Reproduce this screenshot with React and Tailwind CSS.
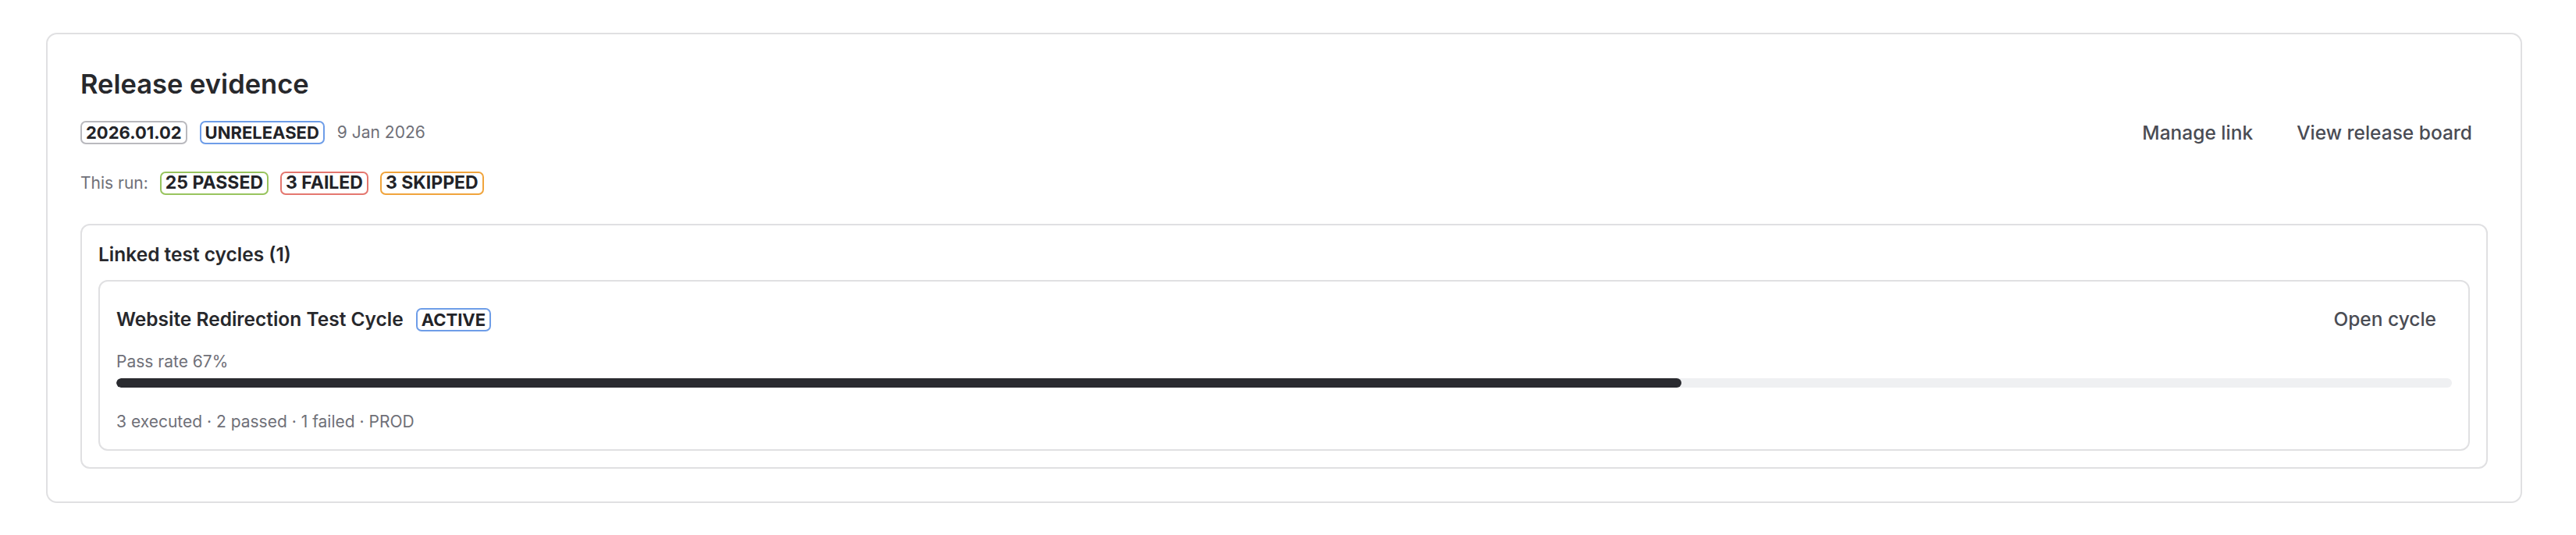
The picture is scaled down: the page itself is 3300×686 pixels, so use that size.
import React from 'react';

// Release evidence panel: version/status header, run totals and linked test cycles

const badgeTones = {
  neutral: 'border-[#b9b9be]',
  info: 'border-[#6e9de8]',
  success: 'border-[#98c45e]',
  danger: 'border-[#e4776f]',
  warning: 'border-[#f0a43c]',
};

const Badge = ({ tone = 'neutral', large = false, children }) => (
  <span
    className={`inline-flex h-[30px] items-center rounded-[7px] border-2 bg-white px-[5px] font-bold leading-none text-[#222328] ${large ? 'text-[23px]' : 'text-[22px]'} ${badgeTones[tone]}`}
  >
    {children}
  </span>
);

const GhostButton = ({ children, className = '' }) => (
  <button
    type="button"
    className={`flex h-[44px] items-center rounded-[8px] px-5 text-[24.5px] font-medium text-[#4a4c54] hover:bg-gray-100 ${className}`}
  >
    {children}
  </button>
);

const cycle = {
  name: 'Website Redirection Test Cycle',
  status: 'ACTIVE',
  passRate: 67,
  executed: 3,
  passed: 2,
  failed: 1,
  env: 'PROD',
};

const CycleCard = ({ item }) => (
  <div className="mt-[17px] rounded-[12px] border-2 border-[#e0e0e2] p-[21px]">
    <div className="flex h-[56px] items-center justify-between">
      <div className="flex items-center gap-4">
        <span className="text-[24.5px] font-semibold text-[#27282c]">{item.name}</span>
        <Badge tone="info">{item.status}</Badge>
      </div>
      <GhostButton>Open cycle</GhostButton>
    </div>
    <p className="mt-[12px] text-[21px] leading-[28px] text-[#6f7078]">Pass rate {item.passRate}%</p>
    <div className="mt-[7px] h-[12px] w-full overflow-hidden rounded-full bg-[#eff0f2]">
      <div className="h-full rounded-full bg-[#2a2b30]" style={{ width: `${item.passRate}%` }} />
    </div>
    <p className="mt-[30px] text-[21px] leading-[28px] text-[#6f7078]">
      {item.executed} executed · {item.passed} passed · {item.failed} failed · {item.env}
    </p>
  </div>
);

export default function App() {
  return (
    <div className="min-h-[686px] bg-white pl-[59px] pr-[69px] pt-[42px] font-[Inter,sans-serif]">
      <section className="rounded-[14px] border-2 border-[#e0e0e2] p-[42px]">
        <h2 className="text-[34.5px] font-semibold leading-[44px] text-[#27282c]">Release evidence</h2>

        <div className="mt-[18px] flex h-[44px] items-center justify-between">
          <div className="flex items-center gap-4">
            <Badge>2026.01.02</Badge>
            <Badge tone="info">UNRELEASED</Badge>
            <span className="text-[21px] text-[#6f7078]">9 Jan 2026</span>
          </div>
          <div className="flex items-center gap-4">
            <GhostButton>Manage link</GhostButton>
            <GhostButton>View release board</GhostButton>
          </div>
        </div>

        <div className="mt-[27px] flex items-center gap-[15px]">
          <span className="text-[21px] text-[#6f7078]">This run:</span>
          <Badge tone="success" large>25 PASSED</Badge>
          <Badge tone="danger" large>3 FAILED</Badge>
          <Badge tone="warning" large>3 SKIPPED</Badge>
        </div>

        <div className="mt-[36px] rounded-[12px] border-2 border-[#e0e0e2] p-[21px]">
          <h3 className="text-[24.5px] font-semibold leading-[32px] text-[#27282c]">Linked test cycles (1)</h3>
          <CycleCard item={cycle} />
        </div>
      </section>
    </div>
  );
}
